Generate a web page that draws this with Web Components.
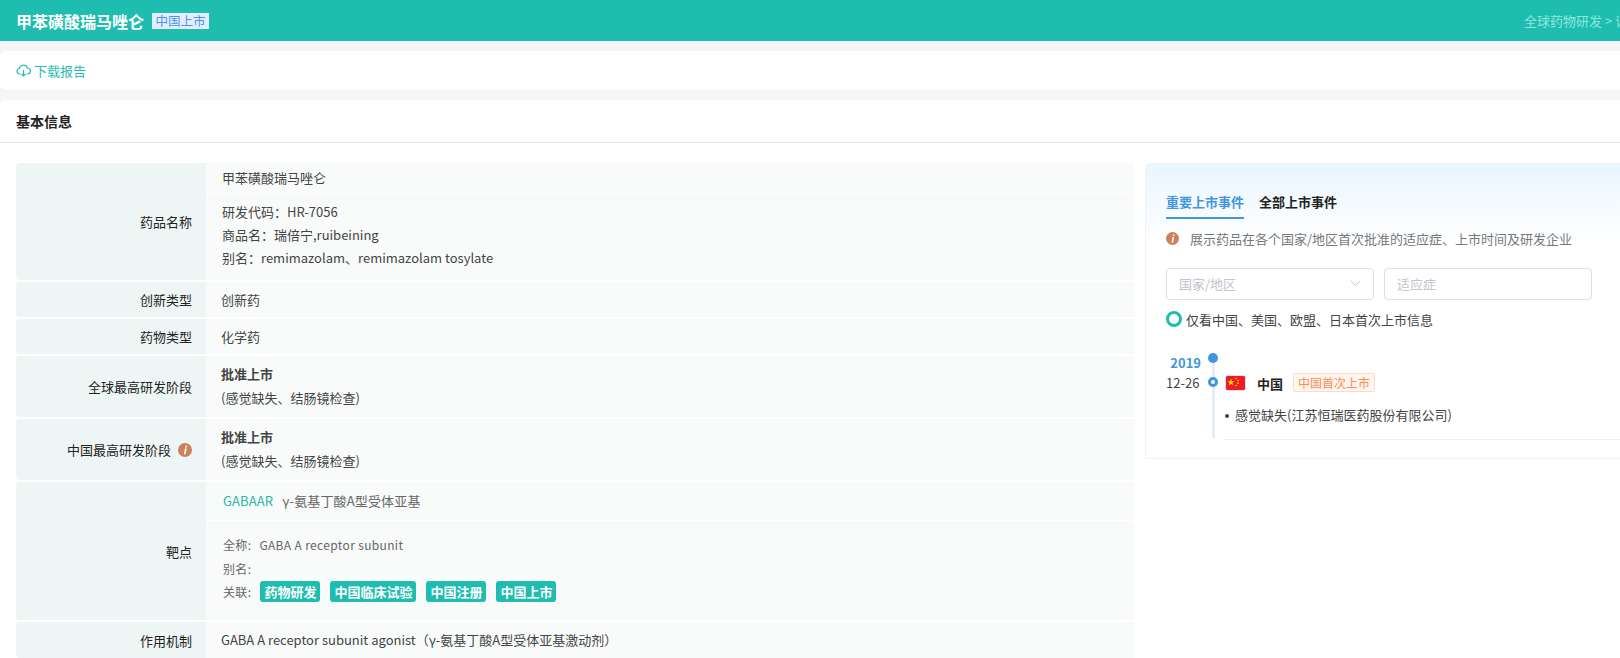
<!DOCTYPE html>
<html lang="zh">
<head>
<meta charset="utf-8">
<title>甲苯磺酸瑞马唑仑</title>
<style>
  html, body { margin: 0; padding: 0; height: 658px; overflow: hidden; background: #f5f6f8; }
  body { font-family: "Noto Sans CJK SC", "Noto Sans", sans-serif; font-size: 13px; color: #444; }
  .page { width: 1800px; }
</style>
</head>
<body>
<div class="page">
  <drug-header name="甲苯磺酸瑞马唑仑" status="中国上市" crumb="全球药物研发 &gt; 详情"></drug-header>
  <report-bar></report-bar>
  <info-card title="基本信息">
    <div slot="left">
      <info-row label="药品名称" split>
        <div slot="top">甲苯磺酸瑞马唑仑</div>
        <div>研发代码：HR-7056</div>
        <div>商品名：瑞倍宁,ruibeining</div>
        <div>别名：remimazolam、remimazolam tosylate</div>
      </info-row>
      <info-row label="创新类型" h="35">创新药</info-row>
      <info-row label="药物类型" h="35">化学药</info-row>
      <info-row label="全球最高研发阶段" h="61">
        <b>批准上市</b><div>(感觉缺失、结肠镜检查)</div>
      </info-row>
      <info-row label="中国最高研发阶段" h="61" hint>
        <b>批准上市</b><div>(感觉缺失、结肠镜检查)</div>
      </info-row>
      <target-row></target-row>
      <info-row label="作用机制" h="36">GABA A receptor subunit agonist（γ-氨基丁酸A型受体亚基激动剂）</info-row>
    </div>
    <event-panel slot="right"></event-panel>
  </info-card>
</div>

<script>
const INFO_ICON = `<svg width="14" height="14" viewBox="0 0 14 14"><circle cx="7" cy="7" r="7" fill="#cd8059"/><path d="M7.500 2.700h1.800l-.4 1.700H7.100zM6.900 5.400h1.800L7.700 11.200H5.900z" fill="#fff"/></svg>`;

class DrugHeader extends HTMLElement {
  connectedCallback() {
    this.attachShadow({ mode: "open" }).innerHTML = `
      <style>
        :host { display: flex; align-items: center; height: 41px; padding: 0 16px; background: #1fbdaf; }
        .name { color: #fff; font-size: 16px; font-weight: 700; }
        .status { margin-left: 8px; height: 16px; line-height: 16px; padding: 0 3.500px; background: #e3eefc; color: #4d94ee; font-size: 12.500px; }
        .crumb { margin-left: 1315px; color: #8ce8de; font-size: 13px; white-space: nowrap; }
      </style>
      <span class="name">${this.getAttribute("name")}</span>
      <span class="status">${this.getAttribute("status")}</span>
      <span class="crumb">${this.getAttribute("crumb").replace(">", "&gt;")}</span>`;
  }
}

class ReportBar extends HTMLElement {
  connectedCallback() {
    this.attachShadow({ mode: "open" }).innerHTML = `
      <style>
        :host { display: flex; align-items: center; gap: 3px; height: 39px; margin-top: 10px; padding: 0 16px; background: #fff; border-radius: 6px; color: #2bbdb0; font-size: 13px; }
      </style>
      <svg width="15" height="13" viewBox="0 0 15 13" fill="none" stroke="#2bbdb0" stroke-width="1.200">
        <path d="M4.500 10H3.400A2.800 2.800 0 0 1 3.200 4.500 4.300 4.300 0 0 1 11.400 4 3 3 0 0 1 11.400 10H10.500"/>
        <path d="M7.500 6v6M5.500 10l2 2 2-2"/>
      </svg>
      <span>下载报告</span>`;
  }
}

class InfoCard extends HTMLElement {
  connectedCallback() {
    this.attachShadow({ mode: "open" }).innerHTML = `
      <style>
        :host { display: block; margin-top: 10px; height: 558px; background: #fff; border-radius: 6px 0 0 0; }
        .head { height: 42px; line-height: 42px; padding: 0 16px; border-bottom: 1px solid #e8e8ea; color: #222; font-size: 14px; font-weight: 700; }
        .body { display: flex; gap: 11px; padding: 20px 0 0 16px; }
        .left { width: 1118px; flex: none; }
        .right { width: 620px; flex: none; }
      </style>
      <div class="head">${this.getAttribute("title")}</div>
      <div class="body">
        <div class="left"><slot name="left"></slot></div>
        <div class="right"><slot name="right"></slot></div>
      </div>`;
  }
}

class InfoRow extends HTMLElement {
  connectedCallback() {
    const h = this.getAttribute("h");
    const hint = this.hasAttribute("hint");
    const split = this.hasAttribute("split");
    this.attachShadow({ mode: "open" }).innerHTML = `
      <style>
        :host { display: flex; margin-bottom: 2px; ${h ? `height:${h}px;` : ""} }
        .label { width: 190px; flex: none; box-sizing: border-box; display: flex; align-items: center; justify-content: flex-end; gap: 7px; padding-right: 14px; background: #eef6f5; border-radius: 4px 0 0 4px; color: #222; white-space: nowrap; }
        .value { flex: 1; background: #f9fbfb; color: #444; }
        .plain { height: 100%; box-sizing: border-box; display: flex; flex-direction: column; justify-content: center; padding-left: 15px; line-height: 24px; ${h > 50 ? "padding-bottom: 2px;" : ""} }
        .top { height: 31px; line-height: 30px; padding-left: 16px; border-bottom: 1px solid #fff; box-sizing: border-box; }
        .rest { height: 86px; box-sizing: border-box; padding: 6px 0 0 16px; line-height: 23px; }
      </style>
      <div class="label"><span>${this.getAttribute("label")}</span>${hint ? INFO_ICON : ""}</div>
      <div class="value">
        ${split ? `<div class="top"><slot name="top"></slot></div><div class="rest"><slot></slot></div>`
                : `<div class="plain"><div><slot></slot></div></div>`}
      </div>`;
  }
}

class TagChip extends HTMLElement {
  connectedCallback() {
    this.attachShadow({ mode: "open" }).innerHTML = `
      <style>
        :host { display: inline-block; height: 21px; line-height: 21px; padding: 0 4px; background: #1fbdaf; border-radius: 3px; color: #fff; font-weight: 700; font-size: 13px; }
      </style><slot></slot>`;
  }
}

class TargetRow extends HTMLElement {
  connectedCallback() {
    this.attachShadow({ mode: "open" }).innerHTML = `
      <style>
        :host { display: flex; height: 138px; margin-bottom: 2px; }
        .label { width: 190px; flex: none; box-sizing: border-box; display: flex; align-items: center; justify-content: flex-end; padding-right: 14px; background: #eef6f5; border-radius: 4px 0 0 4px; color: #222; }
        .value { flex: 1; background: #f9fbfb; color: #666; font-size: 12px; }
        .top { height: 39px; line-height: 37px; padding-left: 17px; border-bottom: 1px solid #fff; box-sizing: border-box; font-size: 13px; letter-spacing: .15px; }
        .top a { color: #2bb7aa; margin-right: 6px; }
        .rest { padding: 12px 0 0 17px; }
        .line { display: flex; align-items: center; height: 23.400px; gap: 8px; letter-spacing: .35px; }
        .chips { display: flex; gap: 10px; margin-left: 1px; letter-spacing: 0; }
      </style>
      <div class="label">靶点</div>
      <div class="value">
        <div class="top"><a>GABAAR</a> γ-氨基丁酸A型受体亚基</div>
        <div class="rest">
          <div class="line"><span>全称:</span><span>GABA A receptor subunit</span></div>
          <div class="line"><span>别名:</span></div>
          <div class="line"><span>关联:</span>
            <div class="chips">
              <tag-chip>药物研发</tag-chip><tag-chip>中国临床试验</tag-chip><tag-chip>中国注册</tag-chip><tag-chip>中国上市</tag-chip>
            </div>
          </div>
        </div>
      </div>`;
  }
}

class EventPanel extends HTMLElement {
  connectedCallback() {
    this.attachShadow({ mode: "open" }).innerHTML = `
      <style>
        :host { display: block; box-sizing: border-box; height: 296px; padding: 28px 0 0 20px; border: 1px solid #f1f2f4; background: linear-gradient(#eaf5fe, #fff 80px); border-radius: 4px 0 0 0; }
        .tabs { display: flex; gap: 15px; height: 27px; font-weight: 700; font-size: 13px; color: #222; }
        .tabs span { height: 27px; line-height: 19px; box-sizing: border-box; }
        .tabs .on { color: #4196e0; border-bottom: 2px solid #4196e0; }
        .note { display: flex; align-items: center; gap: 11px; margin-top: 9px; height: 20px; color: #777; font-size: 13px; }
        .note svg { width: 13px; height: 13px; }
        .filters { display: flex; gap: 10px; margin-top: 20px; }
        .field { box-sizing: border-box; width: 208px; height: 32px; padding: 0 12px 2px; display: flex; align-items: center; justify-content: space-between; background: #fff; border: 1px solid #dcdfe6; border-radius: 4px; color: #c0c4cc; font-size: 13px; }
        .only { display: flex; align-items: center; gap: 4px; margin-top: 8px; height: 22px; color: #444; font-size: 13px; }
        .radio { box-sizing: border-box; width: 16px; height: 16px; border: 3px solid #1fbdaf; border-radius: 50%; background: #fff; }
        .timeline { display: flex; margin-top: 16px; height: 93px; }
        .dates { width: 36px; flex: none; text-align: right; padding-top: 7px; white-space: nowrap; }
        .year { height: 20px; line-height: 20px; color: #4196e0; font-weight: 700; font-size: 13px; margin-right: 1px; }
        .day { height: 20px; line-height: 20px; color: #444; margin-right: 3px; }
        .rail { width: 10px; flex: none; margin: 0 7px 0 6px; display: flex; flex-direction: column; align-items: center; gap: 14px; padding-top: 7px; height: 85px; background: linear-gradient(#e6edf5, #e6edf5) center bottom / 3px 85px no-repeat; }
        .dot { width: 10px; height: 10px; border-radius: 50%; background: #4196e0; }
        .ring { box-sizing: border-box; width: 10px; height: 10px; border-radius: 50%; border: 3px solid #4196e0; background: #fff; }
        .detail { flex: 1; padding-top: 27px; }
        .who { display: flex; align-items: center; height: 20px; }
        .who b { margin: 0 10px 0 11px; color: #222; font-size: 13px; }
        .first { box-sizing: border-box; height: 19px; line-height: 17px; padding: 0 4px; border: 1px solid #fcdcc8; border-radius: 2px; background: #fff6f0; color: #ff8a50; font-size: 12px; margin-top: -2px; }
        .indic { height: 47px; line-height: 44px; box-sizing: border-box; border-bottom: 1px solid #eceef2; color: #444; }
        .indic::before { content: ""; display: inline-block; width: 4px; height: 4px; margin: 0 6px 2px 0; border-radius: 50%; background: #444; }
      </style>
      <div class="tabs"><span class="on">重要上市事件</span><span>全部上市事件</span></div>
      <div class="note">${INFO_ICON}<span>展示药品在各个国家/地区首次批准的适应症、上市时间及研发企业</span></div>
      <div class="filters">
        <div class="field"><span>国家/地区</span>
          <svg width="11" height="7" viewBox="0 0 11 7" fill="none" stroke="#c0c4cc"><path d="M.7.8 5.500 5.600 10.300.8"/></svg>
        </div>
        <div class="field"><span>适应症</span></div>
      </div>
      <div class="only"><span class="radio"></span><span>仅看中国、美国、欧盟、日本首次上市信息</span></div>
      <div class="timeline">
        <div class="dates"><div class="year">2019</div><div class="day">12-26</div></div>
        <div class="rail"><span class="dot"></span><span class="ring"></span></div>
        <div class="detail">
          <div class="who">
            <svg width="21" height="16" viewBox="0 0 21 16"><rect x=".5" y=".5" width="20" height="15" rx="2" fill="#ee1c25" stroke="#e4e4ea"/>
              <path d="M6 3.600l.9 2.600h2.700l-2.200 1.600.8 2.600L6 8.800l-2.200 1.600.8-2.600-2.200-1.600h2.700z" fill="#ffde00"/>
              <circle cx="11" cy="3.500" r=".8" fill="#ffde00"/><circle cx="13" cy="5.600" r=".8" fill="#ffde00"/><circle cx="13" cy="8.400" r=".8" fill="#ffde00"/><circle cx="11" cy="10.600" r=".8" fill="#ffde00"/>
            </svg>
            <b>中国</b><span class="first">中国首次上市</span>
          </div>
          <div class="indic">感觉缺失(江苏恒瑞医药股份有限公司)</div>
        </div>
      </div>`;
  }
}

customElements.define("drug-header", DrugHeader);
customElements.define("report-bar", ReportBar);
customElements.define("info-card", InfoCard);
customElements.define("info-row", InfoRow);
customElements.define("tag-chip", TagChip);
customElements.define("target-row", TargetRow);
customElements.define("event-panel", EventPanel);
</script>
</body>
</html>
